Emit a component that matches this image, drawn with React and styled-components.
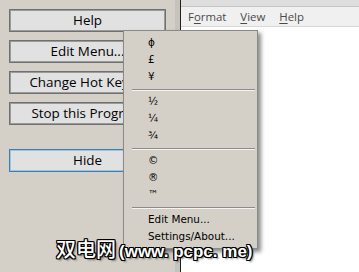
import styled, { createGlobalStyle } from "styled-components";

const GlobalStyle = createGlobalStyle`
  html, body {
    margin: 0;
    padding: 0;
    background: #d4d0c8;
  }
`;

const buttons = [
  { label: "Help" },
  { label: "Edit Menu..." },
  { label: "Change Hot Keys..." },
  { label: "Stop this Program" },
  { label: "Hide", focused: true, spaced: true },
];

const menuGroups = [
  ["ϕ", "£", "¥"],
  ["½", "¼", "¾"],
  ["©", "®", "™"],
  ["Edit Menu...", "Settings/About..."],
];

export default function App() {
  return (
    <Screen>
      <GlobalStyle />
      <LeftPanel>
        {buttons.map(({ label, focused, spaced }) => (
          <PanelButton key={label} $focused={focused} $spaced={spaced}>
            {label}
          </PanelButton>
        ))}
      </LeftPanel>
      <Strip />
      <Window>
        <TitleEdge />
        <MenuBar>
          <MenuBarItem>
            F<u>o</u>rmat
          </MenuBarItem>
          <MenuBarItem>
            <u>V</u>iew
          </MenuBarItem>
          <MenuBarItem>
            <u>H</u>elp
          </MenuBarItem>
        </MenuBar>
        <Editor />
      </Window>

      <PopupMenu>
        {menuGroups.map((group, i) => (
          <MenuGroup key={i}>
            {i > 0 && <Separator />}
            {group.map((item) => (
              <MenuItem key={item}>{item}</MenuItem>
            ))}
          </MenuGroup>
        ))}
      </PopupMenu>

      <Watermark>
        双电网<WatermarkLatin>(www. pcpc. me)</WatermarkLatin>
      </Watermark>
    </Screen>
  );
}

const Screen = styled.div`
  position: relative;
  display: flex;
  width: 359px;
  height: 272px;
  overflow: hidden;
  background: #d4d0c8;
`;

const LeftPanel = styled.div`
  width: 175px;
  flex-shrink: 0;
  display: flex;
  flex-direction: column;
  gap: 8px;
  padding: 9px 0 0 9px;
  box-sizing: border-box;
  background: #d4d0c8;
`;

const PanelButton = styled.button`
  width: 157px;
  height: 23px;
  margin-top: ${({ $spaced }) => ($spaced ? "16px" : "0")};
  padding: 0;
  background: #e1e1e1;
  border: 1px solid ${({ $focused }) => ($focused ? "#3c7fb1" : "#707070")};
  box-shadow: inset 0 0 0 1px
    ${({ $focused }) => ($focused ? "#9fc3e0" : "#9a9a9a")};
  color: #000;
  font-family: "Open Sans", "Noto Sans", sans-serif;
  font-size: 13.4px;
  line-height: 21px;
  white-space: nowrap;
  overflow: hidden;
  text-align: center;
`;

const Strip = styled.div`
  width: 5px;
  flex-shrink: 0;
  background: #c6c3bc;
`;

const Window = styled.div`
  flex: 1;
  display: flex;
  flex-direction: column;
  border-left: 1px solid #202020;
  background: #fff;
`;

const TitleEdge = styled.div`
  height: 6px;
  background: #dedede;
  border-bottom: 1px solid #c4c4c4;
`;

const MenuBar = styled.div`
  display: flex;
  align-items: center;
  gap: 14px;
  height: 19px;
  padding-left: 7px;
  background: #f0f0f0;
  border-bottom: 1px solid #d8d8d8;
`;

const MenuBarItem = styled.span`
  font-family: "Open Sans", "Noto Sans", sans-serif;
  font-size: 11.4px;
  color: #4a4a4a;

  u {
    text-underline-offset: 2px;
  }
`;

const Editor = styled.div`
  flex: 1;
  background: #fff;
`;

const PopupMenu = styled.div`
  position: absolute;
  left: 123px;
  top: 30px;
  width: 132px;
  padding: 3px 0 3px 1px;
  background: #d4d0c8;
  border: 1px solid #8a8a8a;
  box-shadow: 3px 3px 4px rgba(0, 0, 0, 0.45);
`;

const MenuGroup = styled.div`
  display: flex;
  flex-direction: column;
`;

const Separator = styled.div`
  height: 8px;
  margin: 0 2px 0 7px;
  display: flex;
  align-items: center;

  &::before {
    content: "";
    flex: 1;
    height: 1px;
    background: #8c8c8c;
    box-shadow: 0 1px 0 #f4f4f4;
  }
`;

const MenuItem = styled.div`
  height: 17px;
  line-height: 17px;
  padding-left: 23px;
  font-family: "DejaVu Sans", Verdana, sans-serif;
  font-size: 10.4px;
  color: #000;
  white-space: nowrap;
`;

const Watermark = styled.div`
  position: absolute;
  left: 56px;
  top: 234px;
  display: flex;
  align-items: baseline;
  font-family: "Noto Sans CJK SC", "Liberation Sans", sans-serif;
  font-size: 20px;
  font-weight: 500;
  color: #fff;
  white-space: nowrap;
  text-shadow: 1px 0 0 #000, -1px 0 0 #000, 0 1px 0 #000, 0 -1px 0 #000,
    1px 1px 0 #000, -1px -1px 0 #000, 1px -1px 0 #000, -1px 1px 0 #000,
    2px 2px 2px rgba(0, 0, 0, 0.5);
`;

const WatermarkLatin = styled.span`
  margin-left: 3px;
  font-family: "Liberation Sans", Arial, sans-serif;
  font-size: 17px;
  font-weight: 700;
`;
